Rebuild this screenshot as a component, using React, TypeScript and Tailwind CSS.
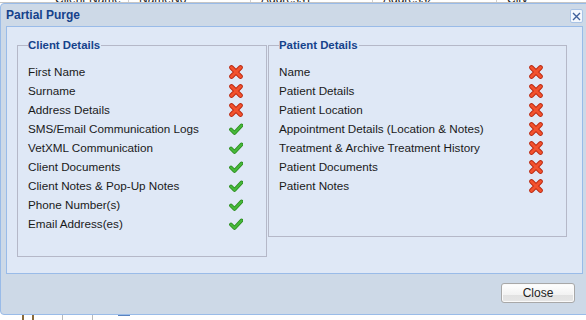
import React from 'react';

const clientRows: { label: string; ok: boolean }[] = [
  { label: 'First Name', ok: false },
  { label: 'Surname', ok: false },
  { label: 'Address Details', ok: false },
  { label: 'SMS/Email Communication Logs', ok: true },
  { label: 'VetXML Communication', ok: true },
  { label: 'Client Documents', ok: true },
  { label: 'Client Notes & Pop-Up Notes', ok: true },
  { label: 'Phone Number(s)', ok: true },
  { label: 'Email Address(es)', ok: true },
];

const patientRows: { label: string; ok: boolean }[] = [
  { label: 'Name', ok: false },
  { label: 'Patient Details', ok: false },
  { label: 'Patient Location', ok: false },
  { label: 'Appointment Details (Location & Notes)', ok: false },
  { label: 'Treatment & Archive Treatment History', ok: false },
  { label: 'Patient Documents', ok: false },
  { label: 'Patient Notes', ok: false },
];

function CrossIcon() {
  return (
    <svg width="14" height="14" viewBox="0 0 14 14">
      <path d="M2.5 2.5 L11.5 11.5 M11.5 2.5 L2.5 11.5" stroke="#b8240c" strokeWidth="4.6" strokeLinecap="round" />
      <path d="M2.5 2.5 L11.5 11.5 M11.5 2.5 L2.5 11.5" stroke="#f2522e" strokeWidth="3" strokeLinecap="round" />
    </svg>
  );
}

function CheckIcon() {
  return (
    <svg width="14" height="14" viewBox="0 0 14 14">
      <path d="M2 7.5 L5.5 11 L12.5 3.5" fill="none" stroke="#2a8a1c" strokeWidth="3.8" strokeLinecap="round" strokeLinejoin="round" />
      <path d="M2 7.5 L5.5 11 L12.5 3.5" fill="none" stroke="#46b83a" strokeWidth="2.2" strokeLinecap="round" strokeLinejoin="round" />
    </svg>
  );
}

function Group({
  title,
  rows,
  labelWidth,
  className,
}: {
  title: string;
  rows: { label: string; ok: boolean }[];
  labelWidth: string;
  className: string;
}) {
  return (
    <fieldset className={`border border-[#b5b8c8] px-[10px] ${className}`}>
      <legend className="pr-[1px] text-[11.4px] font-bold leading-[13px] text-[#15428b]">{title}</legend>
      <div className="mt-[10px] flex flex-col">
        {rows.map((row) => (
          <div key={row.label} className="flex h-[19px] items-center">
            <span className={`${labelWidth} text-[11.7px] text-[#1a1a1a]`}>{row.label}</span>
            {row.ok ? <CheckIcon /> : <CrossIcon />}
          </div>
        ))}
      </div>
    </fieldset>
  );
}

export default function App() {
  return (
    <div className="h-[320px] w-[586px] overflow-hidden bg-white font-['Liberation_Sans',Arial,sans-serif]">
      {/* grid header peeking above dialog */}
      <div className="h-[3px] overflow-hidden border-b border-[#c5c5c5] bg-white">
        <div className="-mt-[10px] flex text-[12px] text-[#222]">
          <div className="w-[129px] border-r border-[#d0d0d0] pl-[55px]">Client Name</div>
          <div className="w-[122px] border-r border-[#d0d0d0] pl-[10px]">NameNo</div>
          <div className="w-[122px] border-r border-[#d0d0d0] pl-[10px]">Address1</div>
          <div className="w-[124px] border-r border-[#d0d0d0] pl-[10px]">Address2</div>
          <div className="pl-[10px]">City</div>
        </div>
      </div>

      {/* dialog */}
      <div className="flex h-[312px] w-[600px] flex-col rounded-[4px] border border-[#99bbe8] bg-[#cdd9e7]">
        <div className="flex h-[22px] items-center justify-between pl-[5px]">
          <span className="text-[12px] font-bold text-[#15428b]">Partial Purge</span>
          <div className="mr-[16px] mt-[2px] flex h-[14px] w-[13px] items-center justify-center rounded-[2px] border border-[#a9c3e6] bg-[#f3f7fd]">
            <svg width="9" height="9" viewBox="0 0 9 9">
              <path d="M1 1 L8 8 M8 1 L1 8" stroke="#3f5f9a" strokeWidth="1.4" />
            </svg>
          </div>
        </div>

        <div className="ml-[5px] flex h-[248px] w-[577px] items-start border border-[#99bbe8] bg-[#dfe8f6] pl-[10px] pt-[12px]">
          <Group title="Client Details" rows={clientRows} labelWidth="w-[201px]" className="h-[218px] w-[250px]" />
          <Group title="Patient Details" rows={patientRows} labelWidth="w-[250px]" className="ml-[1px] h-[198px] w-[299px]" />
        </div>

        <div className="flex flex-1 items-start pl-[500px] pt-[9px]">
          <button className="relative h-[20px] w-[74px] overflow-hidden rounded-[3px] border border-[#a8a8a8] bg-[linear-gradient(#ffffff,#f2f2f2_60%,#e1e1e1_60%,#e6e6e6)] text-[12px] text-[#222] shadow-[inset_0_0_0_1px_#fafafa]">
            Close
          </button>
        </div>
      </div>

      {/* bottom toolbar peeking below dialog */}
      <div className="flex h-[5px] items-start gap-[8px] overflow-hidden pl-[22px]">
        <div className="h-[5px] w-[12px] border-x-2 border-[#8a6a3a]" />
        <div className="ml-[20px] h-[5px] w-[8px] border-l border-[#bbb]" />
        <div className="ml-[14px] h-[5px] w-[8px] border-l border-[#bbb]" />
        <div className="ml-[10px] h-[3px] w-[12px] border-t border-[#5a84c0]" />
      </div>
    </div>
  );
}
